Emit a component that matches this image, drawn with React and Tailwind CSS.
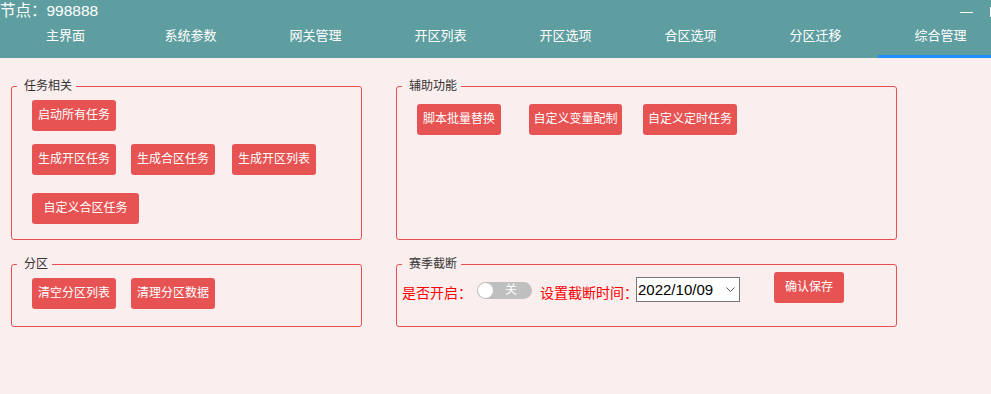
const tabs = ['主界面', '系统参数', '网关管理', '开区列表', '开区选项', '合区选项', '分区迁移', '综合管理'];

const Btn = ({ w, className = '', children }) => (
  <button className={`${w} ${className} h-[31px] shrink-0 rounded-[3px] bg-[#E75353] text-center text-[12px] leading-[31px] text-white`}>
    {children}
  </button>
);

const Group = ({ title, h, children }) => (
  <fieldset className={`${h} rounded-[3px] border border-[#E84F4F] p-0`}>
    <legend className="ml-[5px] pl-[7px] pr-[4px] text-[12px] leading-[16px] text-[#333]">{title}</legend>
    {children}
  </fieldset>
);

export default function App() {
  return (
    <div className="h-[394px] w-full overflow-hidden bg-[#FBEEEE] font-['Liberation_Sans','Noto_Sans_CJK_SC',sans-serif]">
      {/* top bar */}
      <header className="h-[58px] overflow-hidden bg-[#5F9EA0] text-white">
        <div className="flex h-[22px] items-center overflow-hidden">
          <span className="text-[15.5px] leading-[22px]">节点：998888</span>
          <div className="ml-auto mr-[-9px] mt-[2px] flex shrink-0 items-center gap-[17px]">
            <span className="h-px w-[13px] shrink-0 bg-white" />
            <span className="h-[10px] w-[10px] shrink-0 border border-white" />
          </div>
        </div>
        <nav className="flex h-[36px] pl-[3px]">
          {tabs.map((t, i) => (
            <div
              key={t}
              className={`w-[125px] shrink-0 pt-[6px] text-center text-[13px] leading-[16px] ${i === 7 ? 'border-b-[3px] border-[#1E90FF]' : ''}`}
            >
              {t}
            </div>
          ))}
        </nav>
      </header>

      <main className="flex gap-[34px] pl-[11px] pt-[20px]">
        {/* left column */}
        <div className="flex w-[351px] flex-col gap-[16px]">
          <Group title="任务相关" h="h-[162px]">
            <div className="pl-[20px]">
              <div className="mt-[6px] flex">
                <Btn w="w-[84px]">启动所有任务</Btn>
              </div>
              <div className="mt-[13px] flex">
                <Btn w="w-[84px]">生成开区任务</Btn>
                <Btn w="w-[84px]" className="ml-[15px]">生成合区任务</Btn>
                <Btn w="w-[84px]" className="ml-[17px]">生成开区列表</Btn>
              </div>
              <div className="mt-[18px] flex">
                <Btn w="w-[107px]">自定义合区任务</Btn>
              </div>
            </div>
          </Group>
          <Group title="分区" h="h-[71px]">
            <div className="mt-[6px] flex pl-[20px]">
              <Btn w="w-[84px]">清空分区列表</Btn>
              <Btn w="w-[84px]" className="ml-[15px]">清理分区数据</Btn>
            </div>
          </Group>
        </div>

        {/* right column */}
        <div className="flex w-[501px] flex-col gap-[16px]">
          <Group title="辅助功能" h="h-[162px]">
            <div className="mt-[10px] flex pl-[20px]">
              <Btn w="w-[84px]">脚本批量替换</Btn>
              <Btn w="w-[93px]" className="ml-[28px]">自定义变量配制</Btn>
              <Btn w="w-[94px]" className="ml-[21px]">自定义定时任务</Btn>
            </div>
          </Group>
          <Group title="赛季截断" h="h-[71px]">
            <div className="flex items-start pl-[5px]">
              <span className="mt-[11px] text-[14px] leading-[20px] text-[#FF0000]">是否开启：</span>
              <div className="ml-[5px] mt-[10px] flex h-[17px] w-[55px] items-center rounded-full bg-[#BFBFBF] px-[1px]">
                <span className="h-[15px] w-[15px] rounded-full bg-white" />
                <span className="ml-[12px] text-[12px] leading-[15px] text-white">关</span>
              </div>
              <span className="ml-[8px] mt-[11px] text-[14px] leading-[20px] text-[#FF0000]">设置截断时间：</span>
              <div className="ml-[-2px] mt-[5px] flex h-[25px] w-[104px] items-center justify-between border border-[#767676] bg-white pl-[1px] pr-[4px]">
                <span className="text-[15px] leading-[20px] text-black">2022/10/09</span>
                <svg width="9" height="5" viewBox="0 0 9 5" fill="none" stroke="#555" strokeWidth="1">
                  <path d="M0.5 0.5 L4.5 4.5 L8.5 0.5" />
                </svg>
              </div>
              <Btn w="w-[70px]" className="ml-[34px]">确认保存</Btn>
            </div>
          </Group>
        </div>
      </main>
    </div>
  );
}
